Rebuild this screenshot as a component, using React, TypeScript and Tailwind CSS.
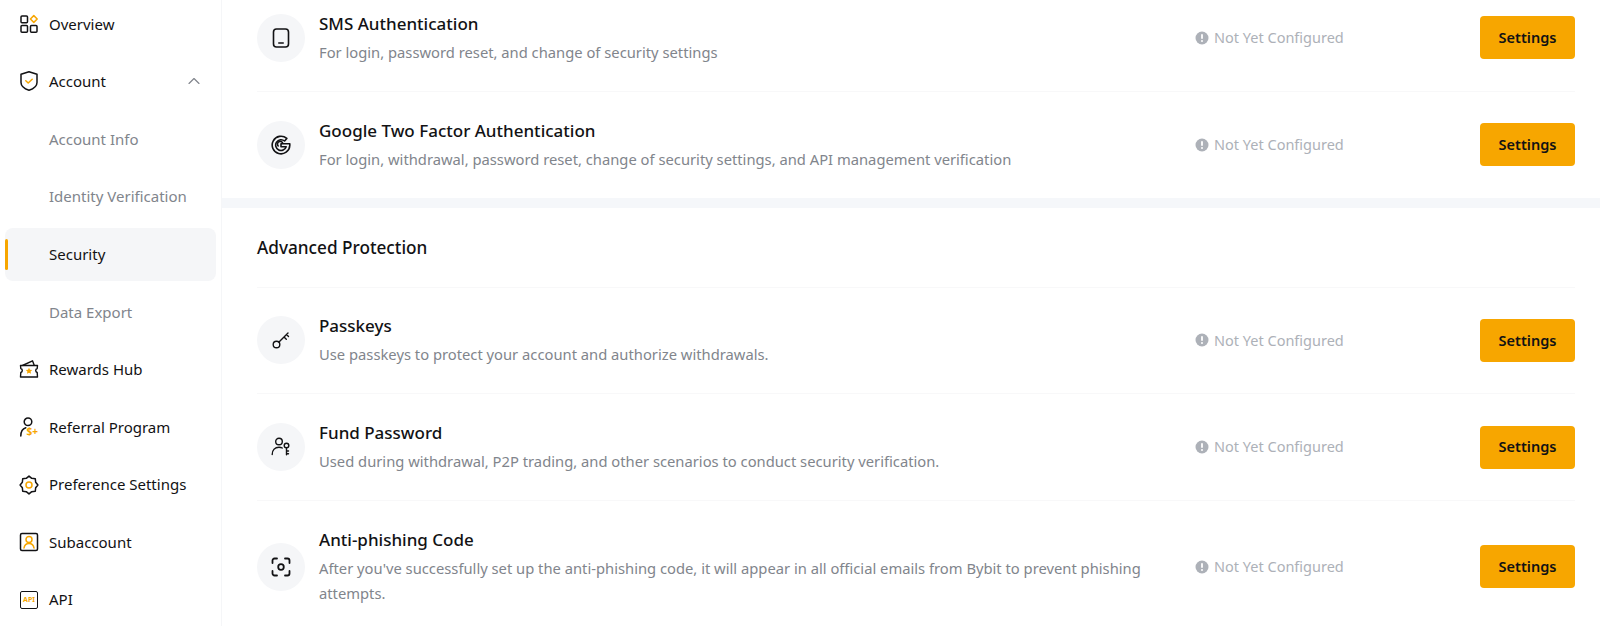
import React from 'react';
import { ChevronUp } from 'lucide-react';

const ORANGE = '#f7a600';
const INK = '#121214';

// eight-lobed cog outline for the preference icon
const GEAR_POINTS = Array.from({ length: 16 }, (_, i) => {
  const radius = i % 2 === 0 ? 8.9 : 7.2;
  const angle = (i * Math.PI) / 8 - Math.PI / 2;
  return `${(10 + radius * Math.cos(angle)).toFixed(2)},${(10 + radius * Math.sin(angle)).toFixed(2)}`;
}).join(' ');

function OverviewIcon(): React.ReactNode {
  return (
    <svg width="20" height="20" viewBox="0 0 20 20" fill="none" strokeWidth="1.5">
      <rect x="2" y="2" width="6.5" height="6.8" rx="1" stroke={INK} />
      <rect x="2" y="11.5" width="6.5" height="6.8" rx="1" stroke={INK} />
      <rect x="11.5" y="11.5" width="6.5" height="6.8" rx="1" stroke={INK} />
      <path d="M14.8 1.6 18.2 5l-3.4 3.4L11.4 5Z" stroke={ORANGE} strokeLinejoin="round" />
    </svg>
  );
}

function ShieldIcon(): React.ReactNode {
  return (
    <svg width="20" height="20" viewBox="0 0 20 20" fill="none" strokeWidth="1.5">
      <path d="M10 .8 18 3.3v8.200c0 3.700-4.200 6.500-8 7.700-3.800-1.200-8-4-8-7.700V3.300Z" stroke={INK} strokeLinejoin="round" />
      <path d="m6.800 9.800 2.400 2.200 4-3.800" stroke={ORANGE} strokeLinecap="round" strokeLinejoin="round" />
    </svg>
  );
}

function RewardsIcon(): React.ReactNode {
  return (
    <svg width="20" height="20" viewBox="0 0 20 20" fill="none" strokeWidth="1.4">
      <path d="M3.500 6.500 13.500 1.800l1.800 4.700" stroke={INK} strokeLinejoin="round" />
      <path d="M1.500 6.500h17l-.3 3c-1 .3-1.500 1.100-1.500 2s.5 1.700 1.500 2l.3 4.500h-17l.3-4.500c1-.3 1.500-1.100 1.500-2s-.5-1.700-1.500-2Z" stroke={INK} strokeLinejoin="round" />
      <path d="m10 8.800 1 2 2.200.3-1.600 1.500.4 2.200-2-1-2 1 .4-2.200-1.600-1.500 2.200-.3Z" fill={ORANGE} />
    </svg>
  );
}

function ReferralIcon(): React.ReactNode {
  return (
    <svg className="overflow-visible" width="20" height="20" viewBox="0 0 20 20" fill="none" strokeWidth="1.5">
      <circle cx="9" cy="4.800" r="3.800" stroke={INK} />
      <path d="M1.800 19c0-4.500 1.800-7.200 5-8.200" stroke={INK} strokeLinecap="round" />
      <text x="7.500" y="18" fontSize="10" fontWeight="700" fill={ORANGE} stroke="none">
        $+
      </text>
    </svg>
  );
}

function GearIcon(): React.ReactNode {
  return (
    <svg width="20" height="20" viewBox="0 0 20 20" fill="none" strokeWidth="1.5">
      <polygon points={GEAR_POINTS} stroke={INK} strokeLinejoin="round" />
      <circle cx="10" cy="10" r="3" stroke={ORANGE} />
    </svg>
  );
}

function SubaccountIcon(): React.ReactNode {
  return (
    <svg width="20" height="20" viewBox="0 0 20 20" fill="none" strokeWidth="1.5">
      <rect x="1.500" y="1.500" width="17" height="17" rx="1.500" stroke={INK} />
      <circle cx="10" cy="7.500" r="3" stroke={ORANGE} />
      <path d="M5 16c.4-2.700 2.400-4.500 5-4.500s4.600 1.800 5 4.500" stroke={ORANGE} strokeLinecap="round" />
    </svg>
  );
}

function ApiIcon(): React.ReactNode {
  return (
    <div className="flex h-[18px] w-[18px] items-center justify-center rounded-[2px] border-[1.5px] border-[#121214] text-[7px] leading-none font-bold text-[#f7a600]">
      API
    </div>
  );
}

function PhoneIcon(): React.ReactNode {
  return (
    <svg width="20" height="20" viewBox="0 0 20 20" fill="none" stroke={INK} strokeWidth="1.6" strokeLinecap="round">
      <rect x="2.500" y="1" width="15" height="18" rx="3" />
      <path d="M7.800 15h4.400" />
    </svg>
  );
}

function GoogleIcon(): React.ReactNode {
  return (
    <svg width="20" height="20" viewBox="0 0 20 20" fill="none" stroke={INK} strokeWidth="1.6" strokeLinejoin="round">
      <path d="M15.800 3.400A8.800 8.800 0 1 0 18.800 10.500V8.800H10v3h5.200A5.400 5.400 0 1 1 13.600 6Z" />
      <path d="M11.800 8.500A2.700 2.700 0 1 0 7.700 11.400" />
    </svg>
  );
}

function KeyIcon(): React.ReactNode {
  return (
    <svg width="20" height="20" viewBox="0 0 20 20" fill="none" stroke={INK} strokeWidth="1.4" strokeLinecap="round">
      <circle cx="5.500" cy="14.500" r="3.300" />
      <path d="M8 12 17 3M13 7l2.300 2.300M15.500 4.500l2 2" />
    </svg>
  );
}

function FundIcon(): React.ReactNode {
  return (
    <svg width="20" height="20" viewBox="0 0 20 20" fill="none" stroke={INK} strokeWidth="1.4" strokeLinecap="round">
      <circle cx="8" cy="4.500" r="3.300" />
      <path d="M1.200 17.500c0-4.500 2.800-7.300 6.800-7.300 1.300 0 2.400.3 3.300.8" />
      <circle cx="15.500" cy="8.500" r="2.300" />
      <path d="M15.500 10.800v7M15.500 14h2M15.500 16.800h2" />
    </svg>
  );
}

function ScanIcon(): React.ReactNode {
  return (
    <svg width="20" height="20" viewBox="0 0 20 20" fill="none" stroke={INK} strokeWidth="1.8" strokeLinecap="round">
      <path d="M1.500 6V3.500a2 2 0 0 1 2-2H6M14 1.500h2.500a2 2 0 0 1 2 2V6M18.500 14v2.500a2 2 0 0 1-2 2H14M6 18.500H3.500a2 2 0 0 1-2-2V14" />
      <circle cx="10" cy="10" r="2.800" />
    </svg>
  );
}

function AlertDot(): React.ReactNode {
  return (
    <svg width="14" height="14" viewBox="0 0 14 14">
      <circle cx="7" cy="7" r="6.500" fill="#adb1b8" />
      <rect x="6.100" y="3" width="1.800" height="5" rx=".9" fill="#ffffff" />
      <circle cx="7" cy="10" r="1" fill="#ffffff" />
    </svg>
  );
}

function NavRow({ icon, label, chevron }: { icon: React.ReactNode; label: string; chevron?: boolean }): React.ReactNode {
  return (
    <div className="flex h-[57.6px] items-center pl-[19px] pr-[17px] text-[15px] text-[#121214]">
      <span className="mr-[10px] flex w-[20px] items-center justify-center">{icon}</span>
      <span className="flex-1">{label}</span>
      {chevron && <ChevronUp size={20} color="#81858c" strokeWidth={1.4} />}
    </div>
  );
}

function SubRow({ label, active }: { label: string; active?: boolean }): React.ReactNode {
  if (active) {
    return (
      <div className="relative mx-[5px] my-[2.3px] flex h-[53px] items-center rounded-lg bg-[#f5f6f8] pl-[44px] text-[15px] text-[#121214]">
        <span className="absolute left-0 top-[11px] h-[31px] w-[3px] rounded-full bg-[#f7a600]" />
        {label}
      </div>
    );
  }
  return <div className="flex h-[57.6px] items-center pl-[49px] text-[15px] text-[#81858c]">{label}</div>;
}

function SecurityRow({ icon, title, desc, tall }: { icon: React.ReactNode; title: string; desc: string; tall?: boolean }): React.ReactNode {
  return (
    <div className={`flex items-center border-b border-[#f8f8f9] last:border-b-0 ${tall ? 'py-[26.5px]' : 'h-[106.6px]'}`}>
      <div className="flex h-12 w-12 shrink-0 items-center justify-center rounded-full bg-[#f5f6f8]">{icon}</div>
      <div className="ml-[14px] flex-1 pr-[40px]">
        <div className="text-[17px] leading-[25px] font-medium text-[#121214]">{title}</div>
        <div className="mt-1 text-[14.75px] leading-[25px] text-[#81858c]">{desc}</div>
      </div>
      <div className="flex w-[285px] shrink-0 items-center gap-[5px] text-[14.5px] text-[#adb1b8]">
        <AlertDot />
        Not Yet Configured
      </div>
      <button className="h-[43px] w-[95px] shrink-0 rounded-[4px] bg-[#f7a600] text-[14.5px] font-semibold text-[#121214]">Settings</button>
    </div>
  );
}

export default function App(): React.ReactNode {
  return (
    <div className="flex h-[626px] overflow-hidden bg-white font-['Noto_Sans','Liberation_Sans',sans-serif]">
      <aside className="-mt-[5px] w-[222px] shrink-0 border-r border-[#f5f6f8]">
        <NavRow icon={<OverviewIcon />} label="Overview" />
        <NavRow icon={<ShieldIcon />} label="Account" chevron />
        <SubRow label="Account Info" />
        <SubRow label="Identity Verification" />
        <SubRow label="Security" active />
        <SubRow label="Data Export" />
        <NavRow icon={<RewardsIcon />} label="Rewards Hub" />
        <NavRow icon={<ReferralIcon />} label="Referral Program" />
        <NavRow icon={<GearIcon />} label="Preference Settings" />
        <NavRow icon={<SubaccountIcon />} label="Subaccount" />
        <NavRow icon={<ApiIcon />} label="API" />
      </aside>

      <main className="-mt-[15px] flex-1">
        <section className="pl-[35px] pr-[25px]">
          <SecurityRow icon={<PhoneIcon />} title="SMS Authentication" desc="For login, password reset, and change of security settings" />
          <SecurityRow
            icon={<GoogleIcon />}
            title="Google Two Factor Authentication"
            desc="For login, withdrawal, password reset, change of security settings, and API management verification"
          />
        </section>
        <div className="h-[10px] bg-[#f5f7fa]" />
        <section className="pl-[35px] pr-[25px]">
          <h2 className="flex h-[79.5px] items-center border-b border-[#f8f8f9] text-[17.2px] font-medium text-[#121214]">Advanced Protection</h2>
          <SecurityRow icon={<KeyIcon />} title="Passkeys" desc="Use passkeys to protect your account and authorize withdrawals." />
          <SecurityRow
            icon={<FundIcon />}
            title="Fund Password"
            desc="Used during withdrawal, P2P trading, and other scenarios to conduct security verification."
          />
          <SecurityRow
            tall
            icon={<ScanIcon />}
            title="Anti-phishing Code"
            desc="After you've successfully set up the anti-phishing code, it will appear in all official emails from Bybit to prevent phishing attempts."
          />
        </section>
      </main>
    </div>
  );
}
